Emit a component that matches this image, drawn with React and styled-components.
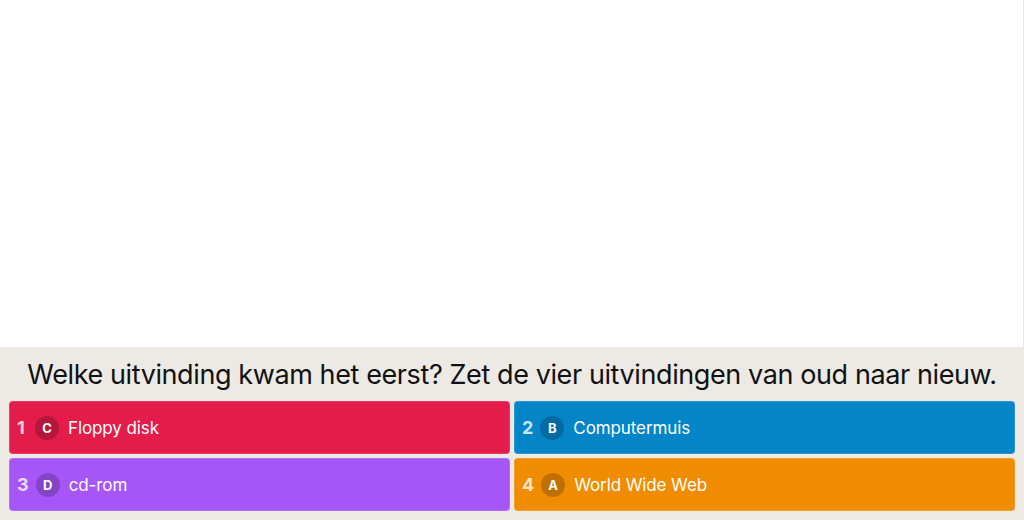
import React from "react";
import styled, { createGlobalStyle } from "styled-components";

const GlobalStyle = createGlobalStyle`
    html, body, #root {
        margin: 0;
        height: 100%;
    }
    body {
        font-family: Inter, "Noto Sans", sans-serif;
        background: #fff;
    }
`;

const items = [
    { pos: 1, letter: 'C', label: 'Floppy disk', color: '#e31c4a' },
    { pos: 2, letter: 'B', label: 'Computermuis', color: '#0385c8' },
    { pos: 3, letter: 'D', label: 'cd-rom', color: '#a655f7' },
    { pos: 4, letter: 'A', label: 'World Wide Web', color: '#f08c00' },
];

const App = () => {
    return (
        <>
            <GlobalStyle />
            <Pagina>
                <Escenario />
                <Paneel>
                    <Vraag>Welke uitvinding kwam het eerst? Zet de vier uitvindingen van oud naar nieuw.</Vraag>
                    <Raster>
                        {items.map(item => (
                            <Antwoord key={item.pos} kleur={item.color}>
                                <Nummer>{item.pos}</Nummer>
                                <Letter>{item.letter}</Letter>
                                <Label>{item.label}</Label>
                            </Antwoord>
                        ))}
                    </Raster>
                </Paneel>
            </Pagina>
        </>
    )
}

export default App;

const Pagina = styled.div`
    height: 100vh;
    display: flex;
    flex-direction: column;
`;

const Escenario = styled.div`
    flex: 1;
    background: #fff;
    border-right: 1px solid #e6e6e6;
`;

const Paneel = styled.div`
    background: #edeae5;
    padding: 10px 9px 9px;
`;

const Vraag = styled.h2`
    margin: 0 0 8px;
    text-align: center;
    white-space: nowrap;
    font-weight: 400;
    font-size: 27px;
    letter-spacing: -0.4px;
    line-height: 36px;
    color: #111;
`;

const Raster = styled.div`
    display: grid;
    grid-template-columns: 1fr 1fr;
    gap: 4px;
`;

const Antwoord = styled.div`
    height: 53px;
    box-sizing: border-box;
    display: flex;
    align-items: center;
    padding: 0 7px;
    border-radius: 4px;
    background: ${({kleur}) => kleur};
    border: 1px solid rgba(255, 255, 255, 0.15);
    color: #fff;
`;

const Nummer = styled.span`
    font-weight: 700;
    font-size: 18px;
    color: rgba(255, 255, 255, 0.8);
    min-width: 11px;
`;

const Letter = styled.span`
    width: 24px;
    height: 24px;
    margin: 0 9px 0 7px;
    border-radius: 50%;
    background: rgba(0, 0, 0, 0.2);
    display: flex;
    align-items: center;
    justify-content: center;
    font-size: 13px;
    font-weight: 700;
`;

const Label = styled.span`
    font-size: 17px;
    letter-spacing: -0.1px;
    color: #fff;
`;
